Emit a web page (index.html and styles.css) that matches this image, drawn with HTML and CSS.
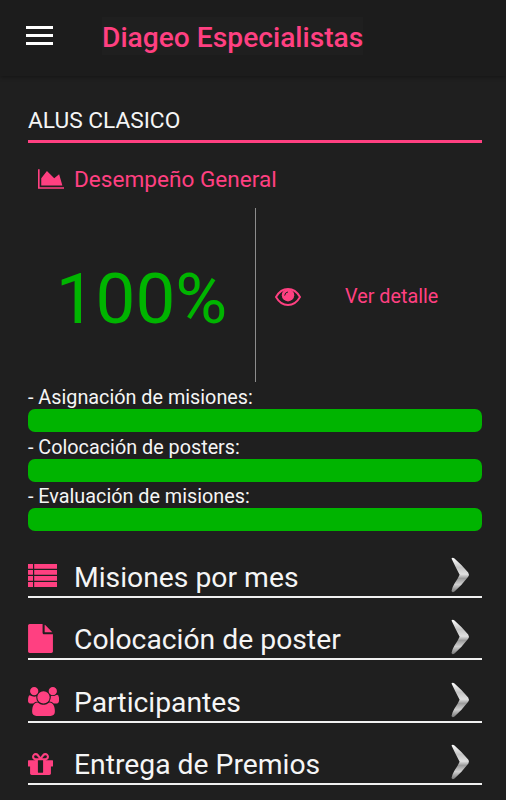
FILE: index.html
```
<!DOCTYPE html>
<html lang="es">
<head>
    <meta charset="UTF-8">
    <meta name="viewport" content="width=device-width, initial-scale=1.0">
    <title>Diageo Especialistas</title>
    <link rel="stylesheet" href="styles.css">
</head>
<body>
    <!-- shared arrow for the menu rows -->
    <svg width="0" height="0">
        <defs>
            <linearGradient id="metal" x1="0" y1="0" x2="0" y2="1">
                <stop offset="0" stop-color="#ffffff"/>
                <stop offset="0.28" stop-color="#c4c4c4"/>
                <stop offset="0.48" stop-color="#e0e0e0"/>
                <stop offset="0.6" stop-color="#9a9a9a"/>
                <stop offset="0.78" stop-color="#d0d0d0"/>
                <stop offset="1" stop-color="#777777"/>
            </linearGradient>
            <symbol id="arrow" viewBox="0 0 20 36">
                <path d="M1.500 1.500Q2.500 0 4.500 1.500Q12 8 18.200 15.500Q19.600 17.500 18.200 19.800Q12 28 4.500 34.500Q2.300 36 1.500 34Q2 30.500 4.500 26.500Q7.500 22.500 9.600 17.800Q5.500 10 1.500 1.500z" fill="url(#metal)"/>
            </symbol>
        </defs>
    </svg>

    <header class="header">
        <button class="menu-button" type="button" aria-label="Menú">
            <span></span>
            <span></span>
            <span></span>
        </button>
        <h1>Diageo Especialistas</h1>
    </header>

    <main class="content">
        <h2>ALUS CLASICO</h2>

        <div class="section-title">
            <svg width="26" height="20" viewBox="0 0 2048 1536"><path d="M2048 1408v128h-2048v-1536h128v1408h1920zM1664 384l256 896h-1664v-576l448-576 576 576z"/></svg>
            <h3>Desempeño General</h3>
        </div>

        <div class="summary">
            <div class="percent">100%</div>
            <a class="detail" href="#">
                <svg class="eye" width="26" height="18" viewBox="0 0 26 18">
                    <path class="line" d="M1 9Q5.500 1 13 1T25 9Q20.500 17 13 17T1 9z"/>
                    <circle cx="13" cy="7.200" r="6.200"/>
                    <path class="shine" d="M9.700 7.200Q9.900 4.300 12.600 4"/>
                </svg>
                <span>Ver detalle</span>
            </a>
        </div>

        <div class="progress-list">
            <div class="progress">
                <label>- Asignación de misiones:</label>
                <div class="bar"></div>
            </div>
            <div class="progress">
                <label>- Colocación de posters:</label>
                <div class="bar"></div>
            </div>
            <div class="progress">
                <label>- Evaluación de misiones:</label>
                <div class="bar"></div>
            </div>
        </div>

        <nav class="menu">
            <a class="menu-item" href="#">
                <span class="icon"><svg class="list" width="30" height="23" viewBox="0 0 30 23"><path d="M0 0h5v4.800h-5zM6.200 0h22.800v4.800h-22.800zM0 6h5v4.800h-5zM6.200 6h22.800v4.800h-22.800zM0 12h5v4.800h-5zM6.200 12h22.800v4.800h-22.800zM0 18h5v4.900h-5zM6.200 18h22.800v4.900h-22.800z"/></svg></span>
                <span class="text">Misiones por mes</span>
                <svg class="arrow" width="20" height="36"><use href="#arrow"/></svg>
            </a>
            <a class="menu-item" href="#">
                <span class="icon"><svg class="file" width="25" height="29" viewBox="128 0 1536 1792"><path d="M1152 512v-472q22 14 36 28l408 408q14 14 28 36h-472zm-128 32q0 40 28 68t68 28h544v1056q0 40-28 68t-68 28h-1344q-40 0-68-28t-28-68v-1600q0-40 28-68t68-28h800v544z"/></svg></span>
                <span class="text">Colocación de poster</span>
                <svg class="arrow" width="20" height="36"><use href="#arrow"/></svg>
            </a>
            <a class="menu-item" href="#">
                <span class="icon"><svg class="users" width="31" height="29" viewBox="64 0 1920 1792"><path d="M657 896q-162 5-265 128h-134q-82 0-138-40.500t-56-118.500q0-353 124-353 6 0 43.500 21t97.500 42.500 119 21.500q67 0 133-23-5 37-5 66 0 159 90 294zm1071 637q0 120-73 189.500t-194 69.500h-874q-121 0-194-69.500t-73-189.500q0-53 3.500-103.500t14-109 26.500-108.500 43-97.500 62-81 85.500-53.500 111.500-20q10 0 43 21.500t73 48 107 48 135 21.500 135-21.500 107-48 73-48 43-21.500q61 0 111.500 20t85.500 53.500 62 81 43 97.500 26.500 108.500 14 109 3.500 103.500zm-1024-1277q0 106-75 181t-181 75-181-75-75-181 75-181 181-75 181 75 75 181zm704 384q0 159-112.500 271.500t-271.500 112.500-271.500-112.500-112.500-271.500 112.500-271.500 271.500-112.500 271.500 112.500 112.500 271.500zm576 225q0 78-56 118.500t-138 40.500h-134q-103-123-265-128 90-135 90-294 0-29-5-66 66 23 133 23 59 0 119-21.500t97.500-42.500 43.500-21q124 0 124 353zm-128-609q0 106-75 181t-181 75-181-75-75-181 75-181 181-75 181 75 75 181z"/></svg></span>
                <span class="text">Participantes</span>
                <svg class="arrow" width="20" height="36"><use href="#arrow"/></svg>
            </a>
            <a class="menu-item" href="#">
                <span class="icon"><svg class="gift" width="25" height="22" viewBox="0 192 1536 1344"><path d="M928 1356v-716h-320v716q0 25 18 38.500t46 13.500h192q28 0 46-13.500t18-38.500zm-456-844h195l-126-161q-26-31-69-31-40 0-68 28t-28 68 28 68 68 28zm688-96q0-40-28-68t-68-28q-43 0-69 31l-125 161h194q40 0 68-28t28-68zm376 256v320q0 14-9 23t-23 9h-96v416q0 40-28 68t-68 28h-1088q-40 0-68-28t-28-68v-416h-96q-14 0-23-9t-9-23v-320q0-14 9-23t23-9h440q-93 0-158.500-65.500t-65.500-158.500 65.500-158.500 158.500-65.500q107 0 168 77l128 165 128-165q61-77 168-77 93 0 158.500 65.500t65.500 158.500-65.500 158.500-158.500 65.500h440q14 0 23 9t9 23z"/></svg></span>
                <span class="text">Entrega de Premios</span>
                <svg class="arrow" width="20" height="36"><use href="#arrow"/></svg>
            </a>
        </nav>
    </main>
</body>
</html>
```
FILE: styles.css
```
* {
    box-sizing: border-box;
}

body {
    margin: 0;
    height: 100vh;
    overflow: hidden;
    background-color: #1f1f1f;
    color: #f5f5f5;
    font-family: Roboto, sans-serif;
}

h1, h2, h3 {
    margin: 0;
}

a {
    color: inherit;
    text-decoration: none;
}

svg {
    display: block;
    flex-shrink: 0;
    fill: #ff4081;
}

.header {
    display: flex;
    align-items: flex-start;
    height: 76px;
    padding: 17px 26px 0;
    background-color: #1c1c1c;
    box-shadow: 0 1px 4px rgba(0, 0, 0, 0.35);
}

.menu-button {
    display: flex;
    flex-direction: column;
    gap: 5px;
    width: 27px;
    margin: 9px 49px 0 0;
    padding: 0;
    border: none;
    background: none;
}

.menu-button span {
    width: 27px;
    height: 3px;
    background-color: #fff;
}

h1 {
    height: 38px;
    line-height: 41px;
    background-color: #1f1f1f;
    color: #ff4081;
    font-size: 28.2px;
    font-weight: 500;
    white-space: nowrap;
}

.content {
    padding: 24px 24px 0 28px;
}

h2 {
    height: 43px;
    line-height: 42px;
    border-bottom: 3px solid #ff4081;
    font-size: 22.7px;
    font-weight: 400;
}

.section-title {
    display: flex;
    align-items: center;
    gap: 10px;
    height: 65px;
    padding: 7px 0 0 10px;
}

h3 {
    padding-top: 2px;
    color: #ff4081;
    font-size: 22.6px;
    font-weight: 400;
    line-height: 30px;
}

.summary {
    display: flex;
    height: 174px;
}

.percent {
    display: flex;
    align-items: center;
    justify-content: center;
    width: 228px;
    padding-top: 6px;
    border-right: 1px solid #8c8c8c;
    color: #00b400;
    font-size: 71px;
}

.detail {
    display: flex;
    align-items: center;
    gap: 44px;
    padding: 3px 0 0 19px;
    color: #ff4081;
    font-size: 19.8px;
}

.eye .line {
    fill: none;
    stroke: #ff4081;
    stroke-width: 1.9;
}

.eye .shine {
    fill: none;
    stroke: #1f1f1f;
    stroke-width: 1;
    stroke-linecap: round;
}

.progress-list {
    padding-top: 2px;
}

.progress {
    height: 49.6px;
}

.progress label {
    display: block;
    height: 25px;
    line-height: 28px;
    font-size: 19.8px;
}

.bar {
    height: 23px;
    border-radius: 7px;
    background-color: #00b400;
}

.menu {
    padding-top: 3px;
}

.menu-item {
    display: flex;
    align-items: flex-end;
    height: 62.3px;
    border-bottom: 2px solid #f0f0f0;
}

.icon {
    width: 46px;
}

.list {
    margin-bottom: 9px;
}

.file {
    margin-bottom: 5px;
}

.users {
    margin-bottom: 5px;
}

.gift {
    margin-bottom: 8px;
}

.text {
    flex: 1;
    font-size: 28.3px;
    line-height: 37px;
}

.arrow {
    margin-right: 12px;
    margin-bottom: 3px;
}
```
